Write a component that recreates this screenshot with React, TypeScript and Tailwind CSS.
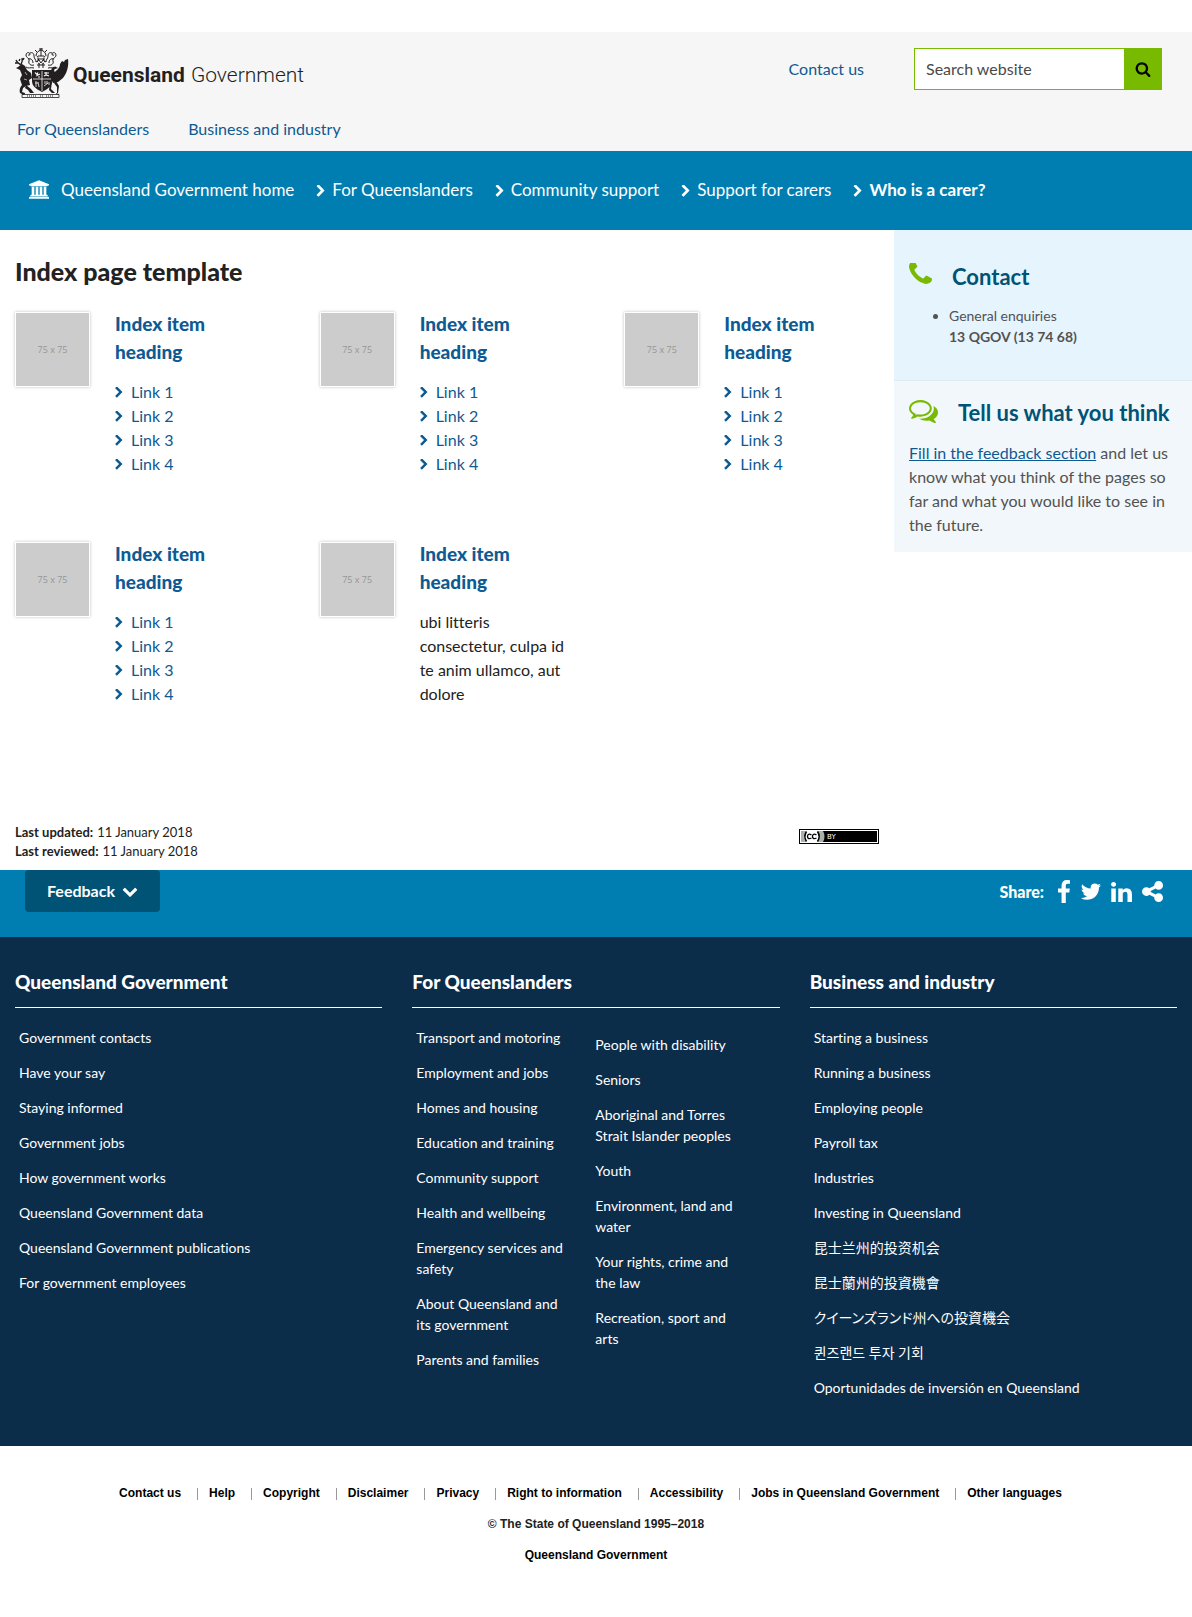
import type { ReactNode } from 'react';

const ICONS = {
  chevronRight:
    'M1363 877l-742 742q-19 19-45 19t-45-19l-166-166q-19-19-19-45t19-45l531-531-531-531q-19-19-19-45t19-45l166-166q19-19 45-19t45 19l742 742q19 19 19 45t-19 45z',
  chevronDown:
    'M1683 808l-742 741q-19 19-45 19t-45-19l-742-741q-19-19-19-45.5t19-45.5l166-165q19-19 45-19t45 19l531 531 531-531q19-19 45-19t45 19l166 165q19 19 19 45.5t-19 45.5z',
  search:
    'M1216 832q0-185-131.5-316.5t-316.5-131.5-316.5 131.5-131.5 316.5 131.5 316.5 316.5 131.5 316.5-131.5 131.5-316.5zm512 832q0 52-38 90t-90 38q-54 0-90-38l-343-342q-179 124-399 124-143 0-273.5-55.5t-225-150-150-225-55.5-273.5 55.5-273.5 150-225 225-150 273.5-55.5 273.5 55.5 225 150 150 225 55.5 273.5q0 220-124 399l343 343q37 37 37 90z',
  bank:
    'M960 0l960 384v128h-128q0 26-20.5 45t-48.5 19h-1526q-28 0-48.5-19t-20.5-45h-128v-128zm-704 640h256v768h128v-768h256v768h128v-768h256v768h128v-768h256v768h59q28 0 48.5 19t20.5 45v64h-1664v-64q0-26 20.5-45t48.5-19h59v-768zm1595 960q28 0 48.5 19t20.5 45v128h-1920v-128q0-26 20.5-45t48.5-19h1782z',
  phone:
    'M1600 1240q0 27-10 70.5t-21 68.5q-21 50-122 106-94 51-186 51-27 0-53-3.5t-57.5-12.5-47-14.5-55.5-20.5-49-18q-98-35-175-83-127-79-264-216t-216-264q-48-77-83-175-3-9-18-49t-20.5-55.5-14.5-47-12.5-57.5-3.5-53q0-92 51-186 56-101 106-122 25-11 68.5-21t70.5-10q14 0 21 3 18 6 53 76 11 19 30 54t35 63.5 31 53.5q3 4 17.5 25t21.5 35.5 7 28.5q0 20-28.5 50t-62 55-62 53-28.5 46q0 9 5 22.5t8.5 20.5 14 24 11.5 19q76 137 174 235t235 174q2 1 19 11.5t24 14 20.5 8.5 22.5 5q18 0 46-28.5t53-62 55-62 50-28.5q14 0 28.5 7t35.5 21.5 25 17.5q25 15 53.5 31t63.5 35 54 30q70 35 76 53 3 7 3 21z',
  comments:
    'M704 384q-153 0-286 52t-211.5 141-78.5 191q0 82 53 158t149 132l97 56-35 84q34-20 62-39l44-31 53 10q78 14 153 14 153 0 286-52t211.5-141 78.5-191-78.5-191-211.5-141-286-52zm0-128q191 0 353.5 68.5t256.5 186.5 94 257-94 257-256.5 186.5-353.5 68.5q-86 0-176-16-124 88-278 128-36 9-86 16h-3q-11 0-20.5-8t-11.5-21q-1-3-1-6.5t.5-6.5 2-6l2.5-5 3.5-5.5 4-5 4.5-5 4-4.5q5-6 23-25t26-29.5 22.5-29 25-38.5 20.5-44q-124-72-195-177t-71-224q0-139 94-257t256.5-186.5 353.5-68.5zm822 1169q10 24 20.5 44t25 38.5 22.5 29 26 29.5 23 25q1 1 4 4.5t4.5 5 4 5 3.5 5.5l2.5 5 2 6 .5 6.5-1 6.5q-3 14-13 22t-22 7q-50-7-86-16-154-40-278-128-90 16-176 16-271 0-472-132 58 4 88 4 161 0 309-45t264-129q125-92 192-212t67-254q0-77-23-152 129 71 204 178t75 230q0 120-71 224.5t-195 176.5z',
  facebook:
    'M1343 12v264h-157q-86 0-116 36t-30 108v189h293l-39 296h-254v759h-306v-759h-255v-296h255v-218q0-186 104-288.5t277-102.5q147 0 228 12z',
  twitter:
    'M1684 408q-67 98-162 167 1 14 1 42 0 130-38 259.5t-115.5 248.5-184.5 210.5-258 146-323 54.5q-271 0-496-145 35 4 78 4 225 0 401-138-105-2-188-64.5t-114-159.5q33 5 61 5 43 0 85-11-112-23-185.5-111.5t-73.5-205.5v-4q68 38 146 41-66-44-105-115t-39-154q0-88 44-163 121 149 294.5 238.5t371.5 99.5q-8-38-8-74 0-134 94.5-228.5t228.5-94.5q140 0 236 102 109-21 205-78-37 115-142 178 93-10 186-50z',
  linkedin:
    'M477 625v991h-330v-991h330zm21-306q1 73-50.5 122t-135.5 49h-2q-82 0-132-49t-50-122q0-74 51.5-122.5t134.5-48.5 133 48.5 51 122.5zm1166 729v568h-329v-530q0-105-40.5-164.5t-126.5-59.5q-63 0-105.5 34.5t-63.5 85.5q-11 30-11 81v553h-329q2-399 2-647t-1-296l-1-48h329v144h-2q20-32 41-56t56.5-52 87-43.5 114.5-15.5q171 0 275 113.5t104 332.5z',
  share:
    'M1344 1024q133 0 226.5 93.5t93.5 226.5-93.5 226.5-226.5 93.5-226.5-93.5-93.5-226.5q0-12 2-34l-360-180q-92 86-218 86-133 0-226.5-93.5t-93.5-226.5 93.5-226.5 226.5-93.5q126 0 218 86l360-180q-2-22-2-34 0-133 93.5-226.5t226.5-93.5 226.5 93.5 93.5 226.5-93.5 226.5-226.5 93.5q-126 0-218-86l-360 180q2 22 2 34t-2 34l360 180q92-86 218-86z',
};

function Icon({ name, box = '0 0 1792 1792', className }: { name: keyof typeof ICONS; box?: string; className: string }) {
  return (
    <svg viewBox={box} className={`shrink-0 fill-current ${className}`} aria-hidden="true">
      <path d={ICONS[name]} />
    </svg>
  );
}

function Crest() {
  return (
    <svg viewBox="0 0 54 50" className="h-[50px] w-[54px] shrink-0" aria-hidden="true">
      <g fill="none" stroke="#231f20" strokeWidth="1">
        {/* mantling and helm */}
        <path d="M19 17c-3 1-6-1-5-4s-3-3-3-6 4-3 4-1-2 1-2 1M15 5c2-1 4 0 4 3s2 3 2 6M13 11c3-1 5 1 5 4M11 19c2 2 5 0 8 1" />
        <path d="M33 17c3 1 6-1 5-4s3-3 3-6-4-3-4-1 2 1 2 1M37 5c-2-1-4 0-4 3s-2 3-2 6M39 11c-3-1-5 1-5 4M41 19c-2 2-5 0-8 1" />
        <path d="M21 8c0-3 2-5 5-6 3 1 5 3 5 6M22 4l-2-2M30 4l2-2M24 1h4M26 0v8M23 8h6M22 11h8M21 14l3-2 2 3 2-3 3 2M22 17h8M24 15v5M28 15v5" />
        <path d="M22 8l2 3-2 2 3 4M30 8l-2 3 2 2-3 4" strokeDasharray="2 1" />
        {/* antlers */}
        <path d="M6 17C4 16 2 15 1 12M3 15H0M6 17c0-2 2-3 1-7M8 12l1-2M4 13l1-2" strokeWidth="1.4" />
        {/* motto scroll */}
        <path d="M7 46.5h37v3H7zM7 46.5l3-1M44 46.5l-3-1" strokeWidth="0.8" />
        <path d="M12 48h10M25 48h3M31 48h8" strokeWidth="1" strokeDasharray="1 1" />
      </g>
      <g fill="#231f20">
        {/* deer */}
        <path d="M3 19l4-3 3 2 2 4 4 3 1 5-3 2 1 5-4 1-3 2-1 4 3 1-1 2-4-2c-1-3 0-6 2-8l-2-6 2-4-2-5-4-2z" />
        <path d="M11 37l5 4 3 4h-4l-2-3-3-2z" />
        {/* brolga */}
        <path d="M53 11c1 7-1 14-5 19l-5 4-5 1-2-4 2-5c3-4 7-5 7-10l2-3 2 1 1-2 3-1z" />
        <path d="M41 33l3 5-1 7h-1v-6l-3-4zM37 34l-1 7 4 4h-3l-3-3 1-8z" />
        <path d="M37 24c-2-3 1-6 4-5l2 1-3 1c-2 1 0 3 1 5l-1 5-3-1z" />
        {/* shield */}
        <path d="M17 22h20v11c0 5-4 8-10 11-6-3-10-6-10-11z" />
      </g>
      <g stroke="#f6f6f6" fill="none">
        <path d="M27 23v20M18 31h18" strokeWidth="0.8" />
        <path d="M20 24.500l2 2 1-2M21 28l4-2M23 29h2M29 25h5M29 28l2-1 3 1M31 24v3" strokeWidth="1.2" />
        <path d="M21 33v6M20 35h3M23 34l1 5M30 33v3M32 33v3M29 38l4-3M34 34v3" strokeWidth="0.8" />
        <path d="M10 24l2 3M9 31l3 1" strokeWidth="0.6" />
      </g>
    </svg>
  );
}

const CRUMBS = ['For Queenslanders', 'Community support', 'Support for carers'];

function IndexItem({ children }: { children: ReactNode }) {
  return (
    <li className="flex h-[230px] items-start gap-[25px]">
      <div className="mt-[2px] flex size-[75px] shrink-0 items-center justify-center border border-white bg-[#ccc] pt-px font-['Open_Sans',sans-serif] text-[9px] text-[#969696] shadow-[0_0_3px_rgba(0,0,0,0.25)]">
        75 x 75
      </div>
      <div className="min-w-0 flex-1">
        <h2 className="mb-[14px] text-[19px] leading-7 font-black text-[#0e5a93]">
          <a href="#item" className="hover:underline">Index item heading</a>
        </h2>
        {children}
      </div>
    </li>
  );
}

function ItemLinks() {
  return (
    <ul>
      {[1, 2, 3, 4].map((n) => (
        <li key={n}>
          <a href={`#link-${n}`} className="flex items-center gap-2 leading-6 text-[#0e5a93] hover:underline">
            <Icon name="chevronRight" box="340 100 1100 1600" className="h-[11px] w-2" />
            Link {n}
          </a>
        </li>
      ))}
    </ul>
  );
}

const GOVERNMENT = [
  'Government contacts', 'Have your say', 'Staying informed', 'Government jobs', 'How government works',
  'Queensland Government data', 'Queensland Government publications', 'For government employees',
];
const QUEENSLANDERS_A = [
  'Transport and motoring', 'Employment and jobs', 'Homes and housing', 'Education and training', 'Community support',
  'Health and wellbeing', 'Emergency services and safety', 'About Queensland and its government', 'Parents and families',
];
const QUEENSLANDERS_B = [
  'People with disability', 'Seniors', 'Aboriginal and Torres Strait Islander peoples', 'Youth',
  'Environment, land and water', 'Your rights, crime and the law', 'Recreation, sport and arts',
];
const BUSINESS: [string, string?][] = [
  ['Starting a business'], ['Running a business'], ['Employing people'], ['Payroll tax'], ['Industries'],
  ['Investing in Queensland'], ['昆士兰州的投资机会', 'zh-Hans'], ['昆士蘭州的投資機會', 'zh-Hant'],
  ['クイーンズランド州への投資機会', 'ja'], ['퀸즈랜드 투자 기회', 'ko'], ['Oportunidades de inversión en Queensland', 'es'],
];
const LEGAL = [
  'Contact us', 'Help', 'Copyright', 'Disclaimer', 'Privacy', 'Right to information', 'Accessibility',
  'Jobs in Queensland Government', 'Other languages',
];

function FooterList({ items, className = '' }: { items: [string, string?][]; className?: string }) {
  return (
    <ul className={`flex flex-col gap-[14px] text-sm leading-[21px] ${className}`}>
      {items.map(([text, lang]) => (
        <li key={text}>
          <a
            href="#footer"
            lang={lang}
            className={lang === 'ja' ? "block font-['Noto_Sans_CJK_JP',sans-serif] [font-feature-settings:'palt'] hover:underline" : 'block hover:underline'}
          >
            {text}
          </a>
        </li>
      ))}
    </ul>
  );
}

function FooterColumn({ title, children }: { title: string; children: ReactNode }) {
  return (
    <section className="min-w-0">
      <h2 className="border-b border-white pb-[13px] text-[19px] leading-6 font-black">{title}</h2>
      <div className="flex gap-[30px] px-1 pt-[19px]">{children}</div>
    </section>
  );
}

const plain = (items: string[]): [string, string?][] => items.map((t) => [t]);

export default function App() {
  return (
    <div className="bg-white pt-8 font-[Lato,'Noto_Sans_CJK_SC',sans-serif] text-base text-[#222] [font-variant-ligatures:none]">
      <header className="bg-[#f6f6f6] px-[15px] pt-4 text-[#0e5a93]">
        <div className="flex h-[69px] items-start">
          <a href="#home" className="flex items-center gap-1 font-[Roboto,sans-serif] text-[#231f20]" aria-label="Queensland Government">
            <Crest />
            <span className="flex items-baseline gap-[6px] pt-1 text-[21px] leading-6">
              <span className="font-bold">Queensland</span>
              <span className="font-light">Government</span>
            </span>
          </a>
          <a href="#contact" className="mt-[9px] mr-[50px] ml-auto leading-6 hover:underline">Contact us</a>
          <form className="mr-[15px] flex h-[42px]" role="search" onSubmit={(e) => e.preventDefault()}>
            <input
              type="text"
              aria-label="Search website"
              placeholder="Search website"
              className="w-[210px] border border-r-0 border-[#78ba00] bg-white px-[11px] text-base text-[#444] outline-none placeholder:text-[#4a4a4a]"
            />
            <button type="submit" aria-label="Search" className="flex w-[38px] items-center justify-center bg-[#78ba00] text-black">
              <Icon name="search" className="size-4" />
            </button>
          </form>
        </div>
        <nav className="flex h-[34px] gap-[39px] px-[2px] leading-6" aria-label="Main">
          <a href="#people" className="hover:underline">For Queenslanders</a>
          <a href="#business" className="hover:underline">Business and industry</a>
        </nav>
      </header>

      <nav aria-label="Breadcrumb" className="bg-[#007eb1] px-[29px] pb-[2px] text-white">
        <ol className="flex h-[77px] items-center text-[17px]">
          <li>
            <a href="#home" className="flex items-center gap-3 hover:underline">
              <Icon name="bank" box="0 0 1920 1792" className="h-[19px] w-5" />
              Queensland Government home
            </a>
          </li>
          {CRUMBS.map((c) => (
            <li key={c} className="ml-[22px] flex items-center gap-[7px]">
              <Icon name="chevronRight" box="300 100 1100 1600" className="mt-[3px] h-3 w-[9px]" />
              <a href="#crumb" className="hover:underline">{c}</a>
            </li>
          ))}
          <li className="ml-[22px] flex items-center gap-[7px] font-bold" aria-current="page">
            <Icon name="chevronRight" box="300 100 1100 1600" className="mt-[3px] h-3 w-[9px]" />
            Who is a carer?
          </li>
        </ol>
      </nav>

      <div className="flex items-start">
        <main className="w-3/4 px-[15px] pt-[23px]">
          <h1 className="mb-[21px] text-[25px] leading-9 font-black">Index page template</h1>
          <ul className="grid grid-cols-3 gap-x-[50px]">
            <IndexItem><ItemLinks /></IndexItem>
            <IndexItem><ItemLinks /></IndexItem>
            <IndexItem><ItemLinks /></IndexItem>
            <IndexItem><ItemLinks /></IndexItem>
            <IndexItem>
              <p className="leading-6">ubi litteris consectetur, culpa id te anim ullamco, aut dolore</p>
            </IndexItem>
          </ul>
          <div className="flex items-start justify-between pt-[53px] pb-[9px]">
            <dl className="text-[13px] leading-[19px]">
              <div className="flex gap-1"><dt className="font-bold">Last updated:</dt><dd>11 January 2018</dd></div>
              <div className="flex gap-1"><dt className="font-bold">Last reviewed:</dt><dd>11 January 2018</dd></div>
            </dl>
            <a href="#licence" aria-label="Creative Commons Attribution licence" className="mt-[6px]">
              <svg viewBox="0 0 80 15" className="h-[15px] w-[80px]" aria-hidden="true">
                <rect width="80" height="15" />
                <rect x="1" y="1" width="78" height="13" fill="#fff" />
                <rect x="2" y="2" width="76" height="11" />
                <path d="M2 2h22c2 3 2 8 0 11H2z" fill="#aab2ab" />
                <path d="M7 2h11c3 3 3 8 0 11H7c-3-3-3-8 0-11z" fill="#fff" />
                <path d="M7.500 2.500c-2 3-2 7 0 10M18.500 2.500c2 3 2 7 0 10" fill="none" stroke="#000" strokeWidth="1.600" />
                <path d="M12.500 6c-3-2-4 0-4 1.500s1 3 4 1.500M17.500 6c-3-2-4 0-4 1.500s1 3 4 1.500" fill="none" stroke="#000" strokeWidth="1.300" />
                <text x="28" y="10" fill="#fff" fontSize="7" fontFamily="DejaVu Sans, sans-serif">BY</text>
              </svg>
            </a>
          </div>
        </main>

        <aside className="w-1/4 text-[#525252]">
          <section className="h-[150px] bg-[#e6f4fe] px-[15px] pt-[30px]">
            <h2 className="flex gap-5 text-[22px] leading-[33px] font-bold text-[#005375]">
              <Icon name="phone" box="192 256 1408 1408" className="mt-[3px] size-[23px] text-[#78ba00]" />
              Contact
            </h2>
            <ul className="mt-3 list-disc pl-10 text-[14px] leading-[21px]">
              <li>General enquiries<br /><strong className="font-bold">13 QGOV (13 74 68)</strong></li>
            </ul>
          </section>
          <section className="border-t border-[#dcebf2] bg-[#f1f7fa] px-[15px] pt-[15px] pb-[15px]">
            <h2 className="flex gap-5 text-[22px] leading-[33px] font-bold text-[#005375]">
              <Icon name="comments" box="0 256 1792 1408" className="mt-1 h-[23px] w-[29px] text-[#78ba00]" />
              Tell us what you think
            </h2>
            <p className="mt-3 leading-6">
              <a href="#feedback" className="text-[#0e5a93] underline">Fill in the feedback section</a> and let us know what you think of the pages so far and what you would like to see in the future.
            </p>
          </section>
        </aside>
      </div>

      <div className="flex h-[67px] items-start justify-between bg-[#007eb1] pr-[29px] pl-[25px] text-white">
        <button type="button" className="flex h-[42px] w-[135px] items-center justify-center gap-[7px] rounded bg-[#005375] font-bold">
          Feedback
          <Icon name="chevronDown" className="size-4" />
        </button>
        <div className="flex h-[43px] items-center gap-[10px] font-black">
          <span className="mr-1">Share:</span>
          <a href="#facebook" aria-label="Facebook"><Icon name="facebook" box="479 0 864 1664" className="h-[23px] w-3" /></a>
          <a href="#twitter" aria-label="Twitter"><Icon name="twitter" box="44 234 1640 1312" className="h-[17px] w-[21px]" /></a>
          <a href="#linkedin" aria-label="LinkedIn"><Icon name="linkedin" box="128 148 1536 1468" className="h-5 w-[21px]" /></a>
          <a href="#share" aria-label="More sharing options"><Icon name="share" box="128 128 1536 1536" className="size-[21px]" /></a>
        </div>
      </div>

      <footer>
        <div className="grid grid-cols-3 gap-[30px] bg-[#0c2d4a] px-[15px] pt-[33px] pb-12 text-white">
          <FooterColumn title="Queensland Government"><FooterList items={plain(GOVERNMENT)} /></FooterColumn>
          <FooterColumn title="For Queenslanders">
            <FooterList items={plain(QUEENSLANDERS_A)} className="w-[149px]" />
            <FooterList items={plain(QUEENSLANDERS_B)} className="mt-[7px] w-[149px]" />
          </FooterColumn>
          <FooterColumn title="Business and industry"><FooterList items={BUSINESS} /></FooterColumn>
        </div>
        <div className="flex flex-col items-center gap-4 pt-10 pb-[52px] font-['Liberation_Sans',sans-serif] text-xs leading-[15px] font-bold">
          <ul className="flex text-black">
            {LEGAL.map((t) => (
              <li key={t} className="flex items-center pr-[11px]">
                <a href="#legal" className="hover:underline">{t}</a>
                {t !== 'Other languages' && <span className="ml-4 h-3 w-px bg-[#999]" />}
              </li>
            ))}
          </ul>
          <p>© The State of Queensland 1995–2018</p>
          <a href="#qld" className="text-black hover:underline">Queensland Government</a>
        </div>
      </footer>
    </div>
  );
}
